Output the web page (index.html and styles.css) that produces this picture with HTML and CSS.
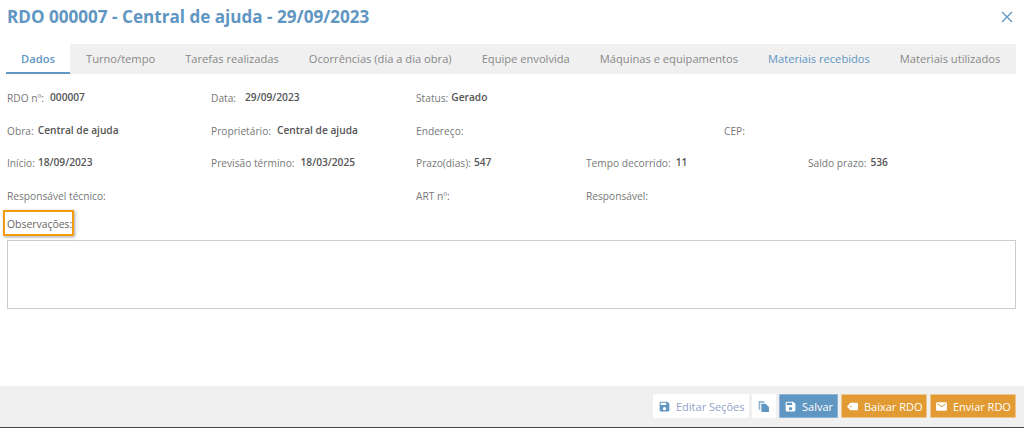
FILE: index.html
```html
<!DOCTYPE html>
<html lang="pt-BR">
<head>
<meta charset="utf-8">
<title>RDO 000007</title>
<link rel="stylesheet" href="styles.css">
</head>
<body>
<div class="modal">
  <header class="head">
    <h1 class="title">RDO 000007 - Central de ajuda - 29/09/2023</h1>
    <svg class="close" viewBox="0 0 12 12" width="12" height="12"><path d="M1 1l10 10M11 1L1 11"/></svg>
  </header>
  <nav class="tabs">
    <span class="tab active">Dados</span>
    <span class="tab">Turno/tempo</span>
    <span class="tab">Tarefas realizadas</span>
    <span class="tab">Ocorrências (dia a dia obra)</span>
    <span class="tab">Equipe envolvida</span>
    <span class="tab">Máquinas e equipamentos</span>
    <span class="tab hl">Materiais recebidos</span>
    <span class="tab">Materiais utilizados</span>
  </nav>
  <section class="info">
    <div class="f"><span class="l">RDO nº:</span><b class="v g6">000007</b></div>
    <div class="f"><span class="l">Data:</span><b class="v g9">29/09/2023</b></div>
    <div class="f s4"><span class="l">Status:</span><b class="v g3">Gerado</b></div>

    <div class="f"><span class="l">Obra:</span><b class="v g4">Central de ajuda</b></div>
    <div class="f"><span class="l">Proprietário:</span><b class="v g6">Central de ajuda</b></div>
    <div class="f s2"><span class="l">Endereço:</span></div>
    <div class="f s2"><span class="l">CEP:</span></div>

    <div class="f"><span class="l">Início:</span><b class="v g3">18/09/2023</b></div>
    <div class="f"><span class="l">Previsão término:</span><b class="v g6">18/03/2025</b></div>
    <div class="f"><span class="l">Prazo(dias):</span><b class="v g3">547</b></div>
    <div class="f s2"><span class="l">Tempo decorrido:</span><b class="v g5">11</b></div>
    <div class="f"><span class="l">Saldo prazo:</span><b class="v g4">536</b></div>

    <div class="f s2"><span class="l">Responsável técnico:</span></div>
    <div class="f"><span class="l">ART nº:</span></div>
    <div class="f s3"><span class="l">Responsável:</span></div>
  </section>
  <div class="obs">
    <span class="obs-label">Observações:</span>
    <div class="obs-box"></div>
  </div>
  <footer class="foot">
    <button class="btn plain w-edit">
      <svg class="ic" viewBox="0 0 24 24"><path d="M17 3H5a2 2 0 0 0-2 2v14a2 2 0 0 0 2 2h14a2 2 0 0 0 2-2V7l-4-4zm-5 16a3 3 0 1 1 0-6 3 3 0 0 1 0 6zm3-10H5V5h10v4z"/></svg>
      Editar Seções
    </button>
    <button class="btn plain w-copy">
      <svg class="ic" viewBox="0 0 24 24"><path d="M3 2h10l1 3H6v13H3V2z" opacity=".7"/><path d="M8 7h8l6 6v9H8V7z"/></svg>
    </button>
    <button class="btn blue w-save">
      <svg class="ic" viewBox="0 0 24 24"><path d="M17 3H5a2 2 0 0 0-2 2v14a2 2 0 0 0 2 2h14a2 2 0 0 0 2-2V7l-4-4zm-5 16a3 3 0 1 1 0-6 3 3 0 0 1 0 6zm3-10H5V5h10v4z"/></svg>
      Salvar
    </button>
    <button class="btn orange w-act">
      <svg class="ic" viewBox="0 0 24 24"><path d="M8 5h12a2 2 0 0 1 2 2v10a2 2 0 0 1-2 2H8l-6-7 6-7z"/><circle cx="9" cy="12" r="1.5" fill="#e29a33"/></svg>
      Baixar RDO
    </button>
    <button class="btn orange w-act">
      <svg class="ic" viewBox="0 0 24 24"><path d="M20 4H4a2 2 0 0 0-2 2v12a2 2 0 0 0 2 2h16a2 2 0 0 0 2-2V6a2 2 0 0 0-2-2zm0 4l-8 5-8-5V6l8 5 8-5v2z"/></svg>
      Enviar RDO
    </button>
  </footer>
</div>
</body>
</html>
```

FILE: styles.css
```css
* { box-sizing: border-box; }
html, body { margin: 0; height: 428px; overflow: hidden; background: #fff; }
body { font-family: "Open Sans", sans-serif; color: #777; font-size: 10px; }
.modal { height: 428px; display: flex; flex-direction: column; border-bottom: 1px solid #444; }
.head { height: 44px; display: flex; align-items: center; justify-content: space-between; padding: 0 11px 10px 7px; flex: none; }
.title { margin: 0; font-size: 17.1px; font-weight: 700; color: #6096c2; line-height: 34px; }
.close { fill: none; stroke: #6096c2; stroke-width: 1.4; }
.tabs { flex: none; height: 30px; margin: 0 8px 0 6px; background: #f0f0f0; display: flex; font-size: 11.15px; color: #888; overflow: hidden; }
.tab { flex: none; padding: 7px 15px 0; white-space: nowrap; }
.tab:nth-child(2) { padding-left: 16px; }
.tab.active { width: 64px; background: #fff; color: #6096c2; font-weight: 600; border-bottom: 2px solid #6096c2; text-align: center; padding: 7px 0 0; }
.tab.hl { color: #6096c2; }
.info { flex: none; padding: 16px 0 0 7px; display: grid; grid-template-columns: 204px 205px 170px 138px 84px 1fr; grid-auto-rows: 32.7px; }
.f { display: flex; font-size: 10.2px; align-items: flex-start; white-space: nowrap; }
.f.s2 { grid-column: span 2; }
.f.s3 { grid-column: span 3; }
.f.s4 { grid-column: span 4; }
.l { color: #777; line-height: 16px; }
.v { font-weight: 600; color: #555; line-height: 14px; }
.g3 { margin-left: 3px; }
.g4 { margin-left: 4px; }
.g5 { margin-left: 5px; }
.g6 { margin-left: 6px; }
.g9 { margin-left: 9px; }
.obs { flex: none; padding: 0 8px 0 7px; margin-top: -5px; }
.obs-label { display: block; font-size: 10.4px; line-height: 16px; color: #666; position: relative; }
.obs-label::after { content: ""; box-sizing: border-box; position: absolute; left: -4px; top: -6px; width: 71px; height: 26px; border: 2.5px solid #f39c12; box-shadow: 1px 1px 3px rgba(0,0,0,.35); }
.obs-box { margin-top: 8px; height: 69px; border: 1px solid #ccc; }
.foot { margin-top: auto; height: 41px; background: #f0f0f0; display: flex; justify-content: flex-end; align-items: flex-start; gap: 3px; padding: 8px 8px 0 0; flex: none; }
.btn { height: 24px; border: 1px solid transparent; border-radius: 1px; font: 11px "Open Sans", sans-serif; padding: 0 0 0 4px; display: flex; align-items: center; gap: 5px; white-space: nowrap; }
.ic { width: 13px; height: 13px; fill: currentColor; flex: none; }
.w-edit { width: 96px; }
.w-copy { width: 24px; }
.w-save { width: 59px; }
.w-act { width: 86px; }
.plain { background: #fff; color: #939fc6; border-color: #fff; }
.plain .ic { fill: #6096c2; }
.blue { background: #6096c2; color: #fff; border-color: #8db2d3; }
.orange { background: #e29a33; color: #fff; border-color: #edc48a; }
```
